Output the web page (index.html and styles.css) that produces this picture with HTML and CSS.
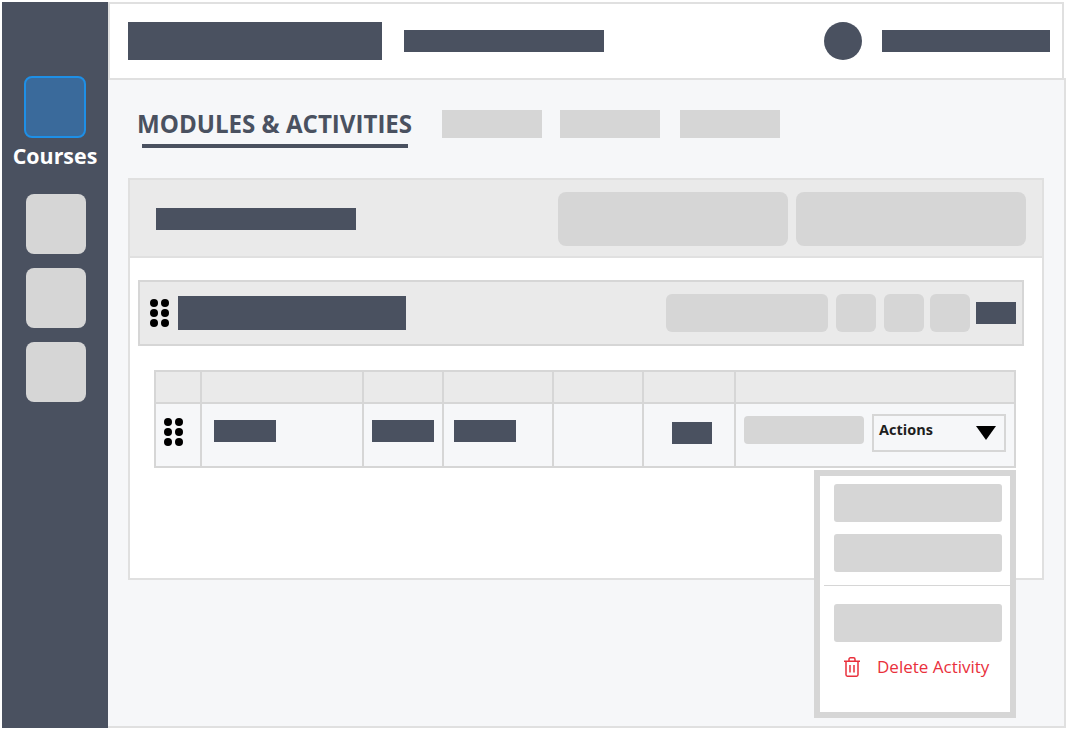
FILE: index.html
```html
<!DOCTYPE html>
<html lang="en">
  <head>
    <meta charset="utf-8">
    <title>Modules &amp; Activities</title>
    <link rel="stylesheet" href="styles.css">
  </head>
  <body>
    <div class="app">
      <nav class="sidebar">
        <div class="nav-active"></div>
        <div class="nav-label">Courses</div>
        <div class="nav-tile"></div>
        <div class="nav-tile"></div>
        <div class="nav-tile"></div>
      </nav>
      <div class="content">
        <header class="topbar">
          <div class="bar logo-bar"></div>
          <div class="bar crumb-bar"></div>
          <div class="avatar"></div>
          <div class="bar user-bar"></div>
        </header>
        <main class="main">
          <div class="tabs">
            <div class="tab-active">MODULES &amp; ACTIVITIES</div>
            <div class="tab"></div>
            <div class="tab"></div>
            <div class="tab"></div>
          </div>
          <section class="panel">
            <div class="panel-head">
              <div class="bar panel-title"></div>
              <div class="panel-btn"></div>
              <div class="panel-btn"></div>
            </div>
            <div class="module-row">
              <svg class="dots" viewBox="0 0 19 28"><circle cx="4" cy="4" r="4"/><circle cx="15" cy="4" r="4"/><circle cx="4" cy="14" r="4"/><circle cx="15" cy="14" r="4"/><circle cx="4" cy="24" r="4"/><circle cx="15" cy="24" r="4"/></svg>
              <div class="bar module-title"></div>
              <div class="mod-btn wide"></div>
              <div class="mod-btn"></div>
              <div class="mod-btn tight"></div>
              <div class="mod-btn tight"></div>
              <div class="bar mod-end"></div>
            </div>
            <div class="table">
              <div class="th"></div>
              <div class="th"></div>
              <div class="th"></div>
              <div class="th"></div>
              <div class="th"></div>
              <div class="th"></div>
              <div class="th"></div>
              <div class="td drag">
                <svg class="dots" viewBox="0 0 19 28"><circle cx="4" cy="4" r="4"/><circle cx="15" cy="4" r="4"/><circle cx="4" cy="14" r="4"/><circle cx="15" cy="14" r="4"/><circle cx="4" cy="24" r="4"/><circle cx="15" cy="24" r="4"/></svg>
              </div>
              <div class="td pad-name"><div class="bar cell-bar"></div></div>
              <div class="td pad-small"><div class="bar cell-bar"></div></div>
              <div class="td pad-date"><div class="bar cell-bar"></div></div>
              <div class="td"></div>
              <div class="td pad-center"><div class="bar count-bar"></div></div>
              <div class="td actions-cell">
                <div class="cell-btn"></div>
                <div class="select">
                  <span class="select-text">Actions</span>
                  <span class="caret"></span>
                </div>
              </div>
            </div>
          </section>
          <div class="menu">
            <div class="menu-item"></div>
            <div class="menu-item"></div>
            <div class="menu-line"></div>
            <div class="menu-item"></div>
            <div class="menu-delete">
              <svg class="trash" viewBox="0 0 18 20" fill="none" stroke="#e9303c" stroke-width="1.5">
                <path d="M1 4.2h16M3 4.2v13.6a1.4 1.4 0 0 0 1.4 1.4h9.2a1.4 1.4 0 0 0 1.4-1.4V4.2M6 4.2V2.2A1.4 1.4 0 0 1 7.4.8h3.2A1.4 1.4 0 0 1 12 2.2v2M7 8v7.5M11 8v7.5"/>
              </svg>
              <span>Delete Activity</span>
            </div>
          </div>
        </main>
      </div>
    </div>
  </body>
</html>
```

FILE: styles.css
```css
* {
  box-sizing: border-box;
}
body {
  margin: 0;
  background: #fff;
  font-family: "Open Sans", "Liberation Sans", sans-serif;
}
.app {
  display: flex;
  width: 1064px;
  height: 726px;
  margin: 2px 0 0 2px;
}
.bar {
  background: #4a5160;
}

/* sidebar */
.sidebar {
  width: 106px;
  flex: none;
  background: #4a5160;
  padding-top: 74px;
  display: flex;
  flex-direction: column;
}
.nav-active {
  width: 62px;
  height: 62px;
  margin-left: 22px;
  background: #3a6a9b;
  border: 2px solid #1e8fe6;
  border-radius: 8px;
}
.nav-label {
  margin: 4px 0 24px;
  text-align: center;
  color: #fff;
  font-size: 21.4px;
  line-height: 28px;
  font-weight: 700;
  white-space: nowrap;
}
.nav-tile {
  width: 60px;
  height: 60px;
  margin: 0 0 14px 24px;
  background: #d6d6d6;
  border-radius: 8px;
}

/* top */
.content {
  flex: 1;
  display: flex;
  flex-direction: column;
  min-width: 0;
}
.topbar {
  height: 78px;
  margin-right: 2px;
  display: flex;
  align-items: center;
  padding: 0 12px 0 18px;
  background: #fff;
  border: 2px solid #e0e0e0;
}
.logo-bar {
  width: 254px;
  height: 38px;
}
.crumb-bar {
  width: 200px;
  height: 22px;
  margin-left: 22px;
}
.avatar {
  width: 38px;
  height: 38px;
  margin-left: auto;
  border-radius: 50%;
  background: #4a5160;
}
.user-bar {
  width: 168px;
  height: 22px;
  margin-left: 20px;
}

/* main */
.main {
  position: relative;
  flex: 1;
  margin-top: -2px;
  padding: 30px 20px 0 20px;
  background: #f6f7f9;
  border: 2px solid #e0e0e0;
  border-left: none;
}
.tabs {
  display: flex;
  align-items: flex-start;
  height: 68px;
}
.tab-active {
  width: 284px;
  margin-right: 30px;
  padding-left: 9px;
  color: #4a5160;
  font-size: 24.1px;
  line-height: 28px;
  font-weight: 700;
  white-space: nowrap;
}
.tab-active::after {
  content: "";
  display: block;
  width: 266px;
  height: 4px;
  margin: 6px 0 0 5px;
  background: #4a5160;
}
.tab {
  width: 100px;
  height: 28px;
  background: #d6d6d6;
  margin-right: 18px;
}
.tab:nth-child(3) {
  margin-right: 20px;
}
.panel {
  height: 402px;
  background: #fff;
  border: 2px solid #e0e0e0;
}
.panel-head {
  height: 78px;
  display: flex;
  align-items: center;
  gap: 8px;
  padding: 2px 16px 0 26px;
  background: #eaeaea;
  border-bottom: 2px solid #e0e0e0;
}
.panel-title {
  width: 200px;
  height: 22px;
  margin-right: auto;
}
.panel-btn {
  width: 230px;
  height: 54px;
  background: #d6d6d6;
  border-radius: 8px;
}
.module-row {
  display: flex;
  align-items: center;
  height: 66px;
  margin: 22px 18px 0 8px;
  padding-left: 10px;
  background: #eaeaea;
  border: 2px solid #d6d6d6;
}
.dots {
  width: 19px;
  height: 28px;
  flex: none;
  fill: #000;
}
.module-title {
  width: 228px;
  height: 34px;
  margin-left: 9px;
  margin-right: auto;
}
.mod-btn {
  width: 40px;
  height: 38px;
  margin-right: 8px;
  background: #d6d6d6;
  border-radius: 6px;
}
.mod-btn.wide {
  width: 162px;
}
.mod-btn.tight {
  margin-right: 6px;
}
.mod-end {
  width: 40px;
  height: 22px;
  margin-right: 6px;
}

/* table */
.table {
  display: grid;
  grid-template-columns: 46px 162px 80px 110px 90px 92px 280px;
  grid-template-rows: 32px 64px;
  width: 862px;
  margin: 24px 0 0 24px;
  border-top: 2px solid #d6d6d6;
  border-left: 2px solid #d6d6d6;
}
.th,
.td {
  border-right: 2px solid #d6d6d6;
  border-bottom: 2px solid #d6d6d6;
}
.th {
  background: #eaeaea;
}
.td {
  background: #f6f7f9;
  display: flex;
  align-items: center;
}
.drag {
  padding: 0 0 6px 8px;
}
.pad-name {
  padding-left: 12px;
}
.pad-small {
  padding-left: 8px;
}
.pad-date {
  padding-left: 10px;
}
.pad-center {
  justify-content: center;
}
.cell-bar {
  width: 62px;
  height: 22px;
  margin-bottom: 8px;
}
.count-bar {
  width: 40px;
  height: 22px;
  margin: 0 0 4px 6px;
}
.actions-cell {
  padding-left: 8px;
}
.cell-btn {
  width: 120px;
  height: 28px;
  margin: 0 8px 10px 0;
  background: #d6d6d6;
  border-radius: 4px;
}
.select {
  display: flex;
  align-items: center;
  justify-content: space-between;
  width: 134px;
  height: 38px;
  padding: 0 8px 0 5px;
  margin-bottom: 4px;
  border: 2px solid #d6d6d6;
  color: #1e1e1e;
  font-size: 14.5px;
  font-weight: 700;
}
.select-text {
  margin-bottom: 7px;
}
.caret {
  width: 0;
  height: 0;
  border-left: 10px solid transparent;
  border-right: 10px solid transparent;
  border-top: 14px solid #000;
}

/* dropdown over the table */
.menu {
  position: absolute;
  left: 706px;
  top: 390px;
  width: 202px;
  height: 248px;
  padding: 8px 8px 0 14px;
  background: #fff;
  border: 6px solid #d6d6d6;
}
.menu-item {
  width: 168px;
  height: 38px;
  margin-bottom: 12px;
  background: #d6d6d6;
  border-radius: 3px;
}
.menu-line {
  height: 1px;
  margin: 13px -8px 18px -10px;
  background: #d6d6d6;
}
.menu-delete {
  display: flex;
  align-items: center;
  gap: 16px;
  margin: 13px 0 0 9px;
  color: #e9303c;
  font-size: 17px;
  line-height: 24px;
  white-space: nowrap;
}
.trash {
  width: 18px;
  height: 20px;
  flex: none;
}
```
